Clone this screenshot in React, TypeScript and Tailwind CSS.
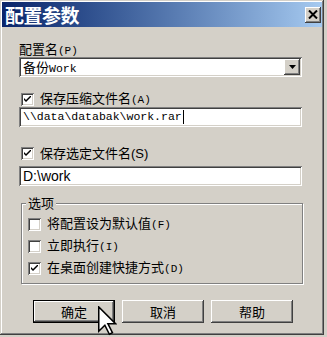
const raised =
  "shadow-[inset_-1px_-1px_#404040,inset_1px_1px_#ffffff,inset_-2px_-2px_#808080,inset_2px_2px_#d4d0c8]";
const sunken =
  "shadow-[inset_1px_1px_#808080,inset_-1px_-1px_#ffffff,inset_2px_2px_#404040,inset_-2px_-2px_#d4d0c8]";

const Mono = ({ children }: { children: React.ReactNode }) => (
  <span className="font-['Liberation_Mono',monospace] text-[11px]">{children}</span>
);

const CheckBox = ({ checked }: { checked?: boolean }) => (
  <div className={`w-[13px] h-[13px] bg-white flex items-center justify-center shrink-0 ${sunken}`}>
    {checked && (
      <svg width="7" height="7" viewBox="0 0 7 7">
        <path d="M0 2 L0 4 L2 6 L7 1 L7 -1 L2 4 Z" fill="#000" />
      </svg>
    )}
  </div>
);

const CheckRow = ({
  checked,
  text,
  mn,
}: {
  checked?: boolean;
  text: string;
  mn: string;
}) => (
  <div className="flex items-center gap-[6px] h-[22px]">
    <CheckBox checked={checked} />
    <span className="leading-[14px]">
      {text}
      <Mono>({mn})</Mono>
    </span>
  </div>
);

const Button = ({ label, isDefault }: { label: string; isDefault?: boolean }) => (
  <div
    className={`w-[82px] h-[23px] flex items-center justify-center ${
      isDefault ? "border border-black" : ""
    }`}
  >
    <div className={`w-full h-full flex items-center justify-center ${raised}`}>
      <span className="leading-[14px]">{label}</span>
    </div>
  </div>
);

export default function App() {
  return (
    <div className="relative w-[327px] h-[337px] bg-[#d4d0c8] overflow-hidden font-['Noto_Sans_CJK_SC',sans-serif] text-[13px] text-black">
      <div className="w-[324px] h-[335px] p-[2px] flex flex-col bg-[#d4d0c8] shadow-[inset_-1px_-1px_#404040,inset_1px_1px_#d4d0c8,inset_-2px_-2px_#808080,inset_2px_2px_#ffffff]">
        {/* title bar */}
        <div className="h-[25px] flex items-center justify-between bg-gradient-to-r from-[#0a246a] to-[#a6caf0] pl-[3px] pr-[1px]">
          <span className="text-white font-bold text-[19px] leading-[22px] tracking-[-0.5px]">配置参数</span>
          <div className={`w-[16px] h-[16px] bg-[#d4d0c8] flex items-center justify-center ${raised}`}>
            <svg width="10" height="9" viewBox="0 0 10 9">
              <path d="M1 0.5 L9 8.5 M9 0.5 L1 8.5" stroke="#000" strokeWidth="2" />
            </svg>
          </div>
        </div>

        <div className="flex flex-col pl-[17px]">
          <div className="mt-[15px] mb-[1px] leading-[14px] h-[14px]">
            配置名<Mono>(P)</Mono>
          </div>

          <div className={`w-[283px] h-[20px] bg-white flex items-center justify-between p-[2px] ${sunken}`}>
            <span className="pl-[2px] pt-[2px] leading-[14px]">
              备份<span className="font-['Liberation_Mono',monospace] text-[11.5px]">Work</span>
            </span>
            <div className={`w-[16px] h-[16px] bg-[#d4d0c8] flex items-center justify-center ${raised}`}>
              <svg width="7" height="4" viewBox="0 0 7 4">
                <path d="M0 0 H7 L3.5 4 Z" fill="#000" />
              </svg>
            </div>
          </div>

          <div className="mt-[15px] ml-[2px] flex items-center gap-[6px] h-[14px]">
            <CheckBox checked />
            <span className="leading-[14px]">
              保存压缩文件名<Mono>(A)</Mono>
            </span>
          </div>

          <div className={`mt-[1px] w-[283px] h-[20px] bg-white flex items-center pl-[4px] ${sunken}`}>
            <span className="font-['Liberation_Mono',monospace] text-[11.5px] leading-[14px]">
              {"\\\\data\\databak\\work.rar"}
            </span>
            <span className="w-px h-[14px] bg-black ml-[1px]" />
          </div>

          <div className="mt-[19px] ml-[2px] flex items-center gap-[6px] h-[14px]">
            <CheckBox checked />
            <span className="leading-[14px]">
              保存选定文件名
              <span className="font-['Liberation_Sans',sans-serif] text-[13px]">(S)</span>
            </span>
          </div>

          <div className={`mt-[6px] w-[283px] h-[20px] bg-white flex items-center pl-[4px] ${sunken}`}>
            <span className="font-['Liberation_Sans',sans-serif] text-[14px] leading-[16px]">
              {"D:\\work"}
            </span>
          </div>

          {/* group box */}
          <div className="relative mt-[17px] ml-[2px] w-[282px] h-[81px] border border-[#808080] shadow-[inset_1px_1px_#ffffff,1px_1px_#ffffff] pt-[9px] pl-[6px]">
            <span className="absolute -top-[8px] left-[4px] px-[2px] bg-[#d4d0c8] leading-[14px]">选项</span>
            <CheckRow text="将配置设为默认值" mn="F" />
            <CheckRow text="立即执行" mn="I" />
            <CheckRow checked text="在桌面创建快捷方式" mn="D" />
          </div>

          <div className="mt-[16px] ml-[14px] flex gap-[7px]">
            <Button label="确定" isDefault />
            <Button label="取消" />
            <Button label="帮助" />
          </div>
        </div>
      </div>

      {/* mouse pointer */}
      <svg
        className="absolute left-[98px] top-[306px]"
        width="19"
        height="30"
        viewBox="0 0 12.5 19.5"
      >
        <path
          d="M0.5 0.5 L0.5 16.5 L4.5 12.5 L7.5 18.5 L9.5 17.5 L6.5 11.5 L11.5 11.5 Z"
          fill="#fff"
          stroke="#000"
          strokeWidth="1"
          strokeLinejoin="miter"
        />
      </svg>
    </div>
  );
}
